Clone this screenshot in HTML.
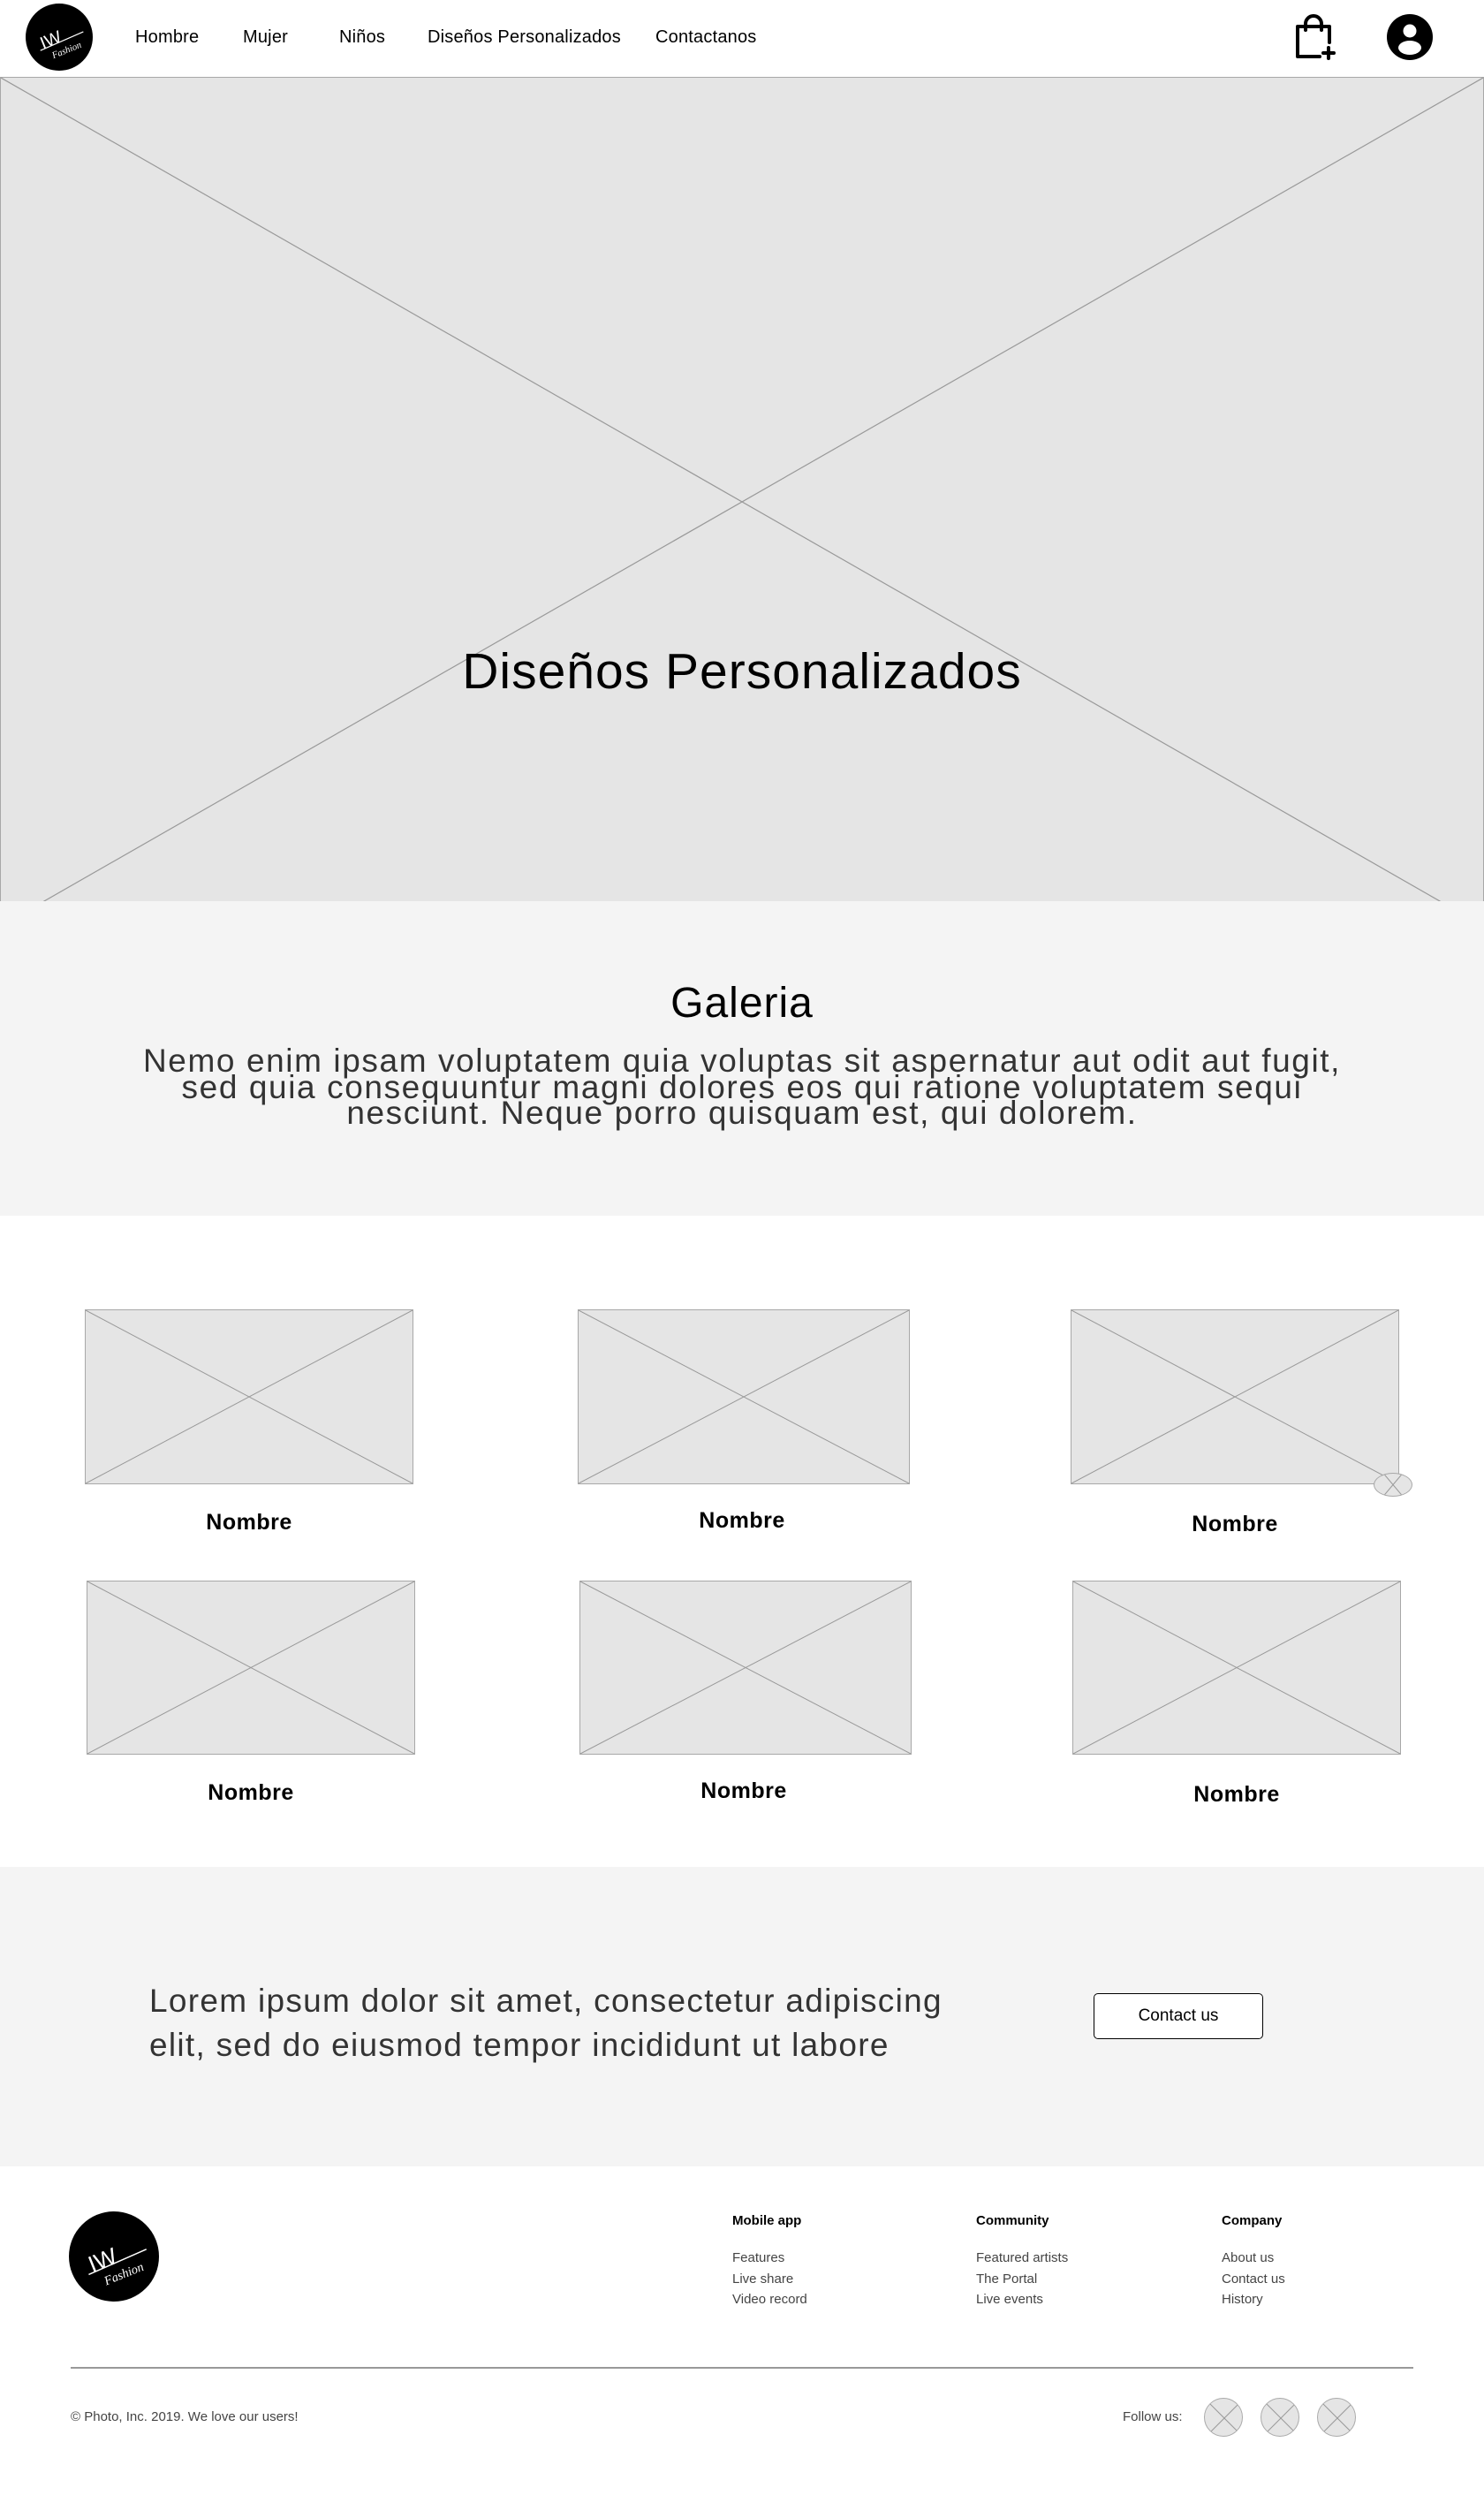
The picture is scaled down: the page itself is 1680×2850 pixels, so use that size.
<!DOCTYPE html>
<html><head><meta charset="utf-8"><style>
*{margin:0;padding:0;box-sizing:border-box}
body{width:1680px;height:2850px;background:#fff;font-family:"Liberation Sans",sans-serif;color:#000;position:relative;overflow:hidden}
.a{position:absolute}
.ph{position:absolute;background:#e5e5e5;border:1.5px solid #a8a8a8}
.ph svg{position:absolute;left:0;top:0;width:100%;height:100%}
.nav{position:absolute;top:31px;font-size:20px;letter-spacing:.2px}
.nm{position:absolute;font-weight:bold;font-size:25px;text-align:center;width:200px;letter-spacing:.5px}
.fh{position:absolute;top:2505px;font-weight:bold;font-size:15px}
.fl{position:absolute;font-size:15px;color:#444;line-height:23.5px;top:2544px}
.soc{position:absolute;top:2714px;width:44px;height:44px;border-radius:50%;background:#e5e5e5;border:1.5px solid #aaa;overflow:hidden}
</style></head><body>

<svg class="a" style="left:29px;top:4px" width="76" height="76" viewBox="0 0 100 100">
<circle cx="50" cy="50" r="50" fill="#000"/>
<text x="22" y="62" fill="#fff" font-family="Liberation Sans" font-size="26" transform="rotate(-22 40 55)">IW</text>
<line x1="22" y1="70" x2="86" y2="42" stroke="#fff" stroke-width="1.5"/>
<text x="38" y="76" fill="#fff" font-family="Liberation Serif" font-style="italic" font-size="14" transform="rotate(-22 55 70)">Fashion</text>
</svg>
<div class="nav" style="left:153px">Hombre</div>
<div class="nav" style="left:275px">Mujer</div>
<div class="nav" style="left:384px">Niños</div>
<div class="nav" style="left:484px">Diseños Personalizados</div>
<div class="nav" style="left:742px">Contactanos</div>

<svg class="a" style="left:1464px;top:16px" width="48" height="54" viewBox="0 0 48 54">
<path d="M14 18 V11 a9 9 0 0 1 18 0 V18" fill="none" stroke="#000" stroke-width="4" stroke-linecap="round"/>
<path d="M30 48 H5 V14 H41 V32" fill="none" stroke="#000" stroke-width="4" stroke-linecap="round" stroke-linejoin="round"/>
<path d="M40 38 V50 M34 44 H46" stroke="#000" stroke-width="4" stroke-linecap="round"/>
</svg>
<svg class="a" style="left:1570px;top:16px" width="52" height="52" viewBox="0 0 52 52">
<circle cx="26" cy="26" r="26" fill="#000"/>
<circle cx="26" cy="19" r="7.5" fill="#fff"/>
<ellipse cx="26" cy="38" rx="13" ry="8" fill="#fff"/>
</svg>

<div class="ph" style="left:0;top:87px;width:1680px;height:934px;overflow:hidden;border-bottom:none">
<svg preserveAspectRatio="none" viewBox="0 0 100 100" style="height:960px"><line x1="0" y1="0" x2="100" y2="100" stroke="#999" stroke-width="1.2" vector-effect="non-scaling-stroke"/><line x1="100" y1="0" x2="0" y2="100" stroke="#999" stroke-width="1.2" vector-effect="non-scaling-stroke"/></svg>
</div>
<div class="a" style="left:0;width:1680px;top:727px;text-align:center;font-size:57px;letter-spacing:1px">Diseños Personalizados</div>

<div class="a" style="left:0;top:1020px;width:1680px;height:356px;background:#f4f4f4"></div>
<div class="a" style="left:0;width:1680px;top:1108px;text-align:center;font-size:48px;letter-spacing:1px">Galeria</div>
<div class="a" style="left:0;width:1680px;top:1186px;text-align:center;font-size:37px;line-height:29.5px;color:#333;letter-spacing:1.6px;white-space:nowrap">Nemo enim ipsam voluptatem quia voluptas sit aspernatur aut odit aut fugit,<br>sed quia consequuntur magni dolores eos qui ratione voluptatem sequi<br>nesciunt. Neque porro quisquam est, qui dolorem.</div>

<div class="ph" style="left:96px;top:1482px;width:372px;height:198px"><svg preserveAspectRatio="none" viewBox="0 0 100 100"><line x1="0" y1="0" x2="100" y2="100" stroke="#999" vector-effect="non-scaling-stroke"/><line x1="100" y1="0" x2="0" y2="100" stroke="#999" vector-effect="non-scaling-stroke"/></svg></div>
<div class="ph" style="left:654px;top:1482px;width:376px;height:198px"><svg preserveAspectRatio="none" viewBox="0 0 100 100"><line x1="0" y1="0" x2="100" y2="100" stroke="#999" vector-effect="non-scaling-stroke"/><line x1="100" y1="0" x2="0" y2="100" stroke="#999" vector-effect="non-scaling-stroke"/></svg></div>
<div class="ph" style="left:1212px;top:1482px;width:372px;height:198px"><svg preserveAspectRatio="none" viewBox="0 0 100 100"><line x1="0" y1="0" x2="100" y2="100" stroke="#999" vector-effect="non-scaling-stroke"/><line x1="100" y1="0" x2="0" y2="100" stroke="#999" vector-effect="non-scaling-stroke"/></svg></div>
<div class="ph" style="left:1555px;top:1667px;width:44px;height:27px;border-radius:50%;overflow:hidden"><svg preserveAspectRatio="none" viewBox="0 0 100 100"><line x1="25" y1="0" x2="75" y2="100" stroke="#999" vector-effect="non-scaling-stroke"/><line x1="75" y1="0" x2="25" y2="100" stroke="#999" vector-effect="non-scaling-stroke"/></svg></div>
<div class="nm" style="left:182px;top:1709px">Nombre</div>
<div class="nm" style="left:740px;top:1707px">Nombre</div>
<div class="nm" style="left:1298px;top:1711px">Nombre</div>

<div class="ph" style="left:98px;top:1789px;width:372px;height:197px"><svg preserveAspectRatio="none" viewBox="0 0 100 100"><line x1="0" y1="0" x2="100" y2="100" stroke="#999" vector-effect="non-scaling-stroke"/><line x1="100" y1="0" x2="0" y2="100" stroke="#999" vector-effect="non-scaling-stroke"/></svg></div>
<div class="ph" style="left:656px;top:1789px;width:376px;height:197px"><svg preserveAspectRatio="none" viewBox="0 0 100 100"><line x1="0" y1="0" x2="100" y2="100" stroke="#999" vector-effect="non-scaling-stroke"/><line x1="100" y1="0" x2="0" y2="100" stroke="#999" vector-effect="non-scaling-stroke"/></svg></div>
<div class="ph" style="left:1214px;top:1789px;width:372px;height:197px"><svg preserveAspectRatio="none" viewBox="0 0 100 100"><line x1="0" y1="0" x2="100" y2="100" stroke="#999" vector-effect="non-scaling-stroke"/><line x1="100" y1="0" x2="0" y2="100" stroke="#999" vector-effect="non-scaling-stroke"/></svg></div>
<div class="nm" style="left:184px;top:2015px">Nombre</div>
<div class="nm" style="left:742px;top:2013px">Nombre</div>
<div class="nm" style="left:1300px;top:2017px">Nombre</div>

<div class="a" style="left:0;top:2113px;width:1680px;height:339px;background:#f4f4f4"></div>
<div class="a" style="left:169px;top:2240px;font-size:37px;line-height:50px;color:#333;letter-spacing:1.3px;white-space:nowrap">Lorem ipsum dolor sit amet, consectetur adipiscing<br>elit, sed do eiusmod tempor incididunt ut labore</div>
<div class="a" style="left:1238px;top:2256px;width:192px;height:52px;border:1.5px solid #000;border-radius:5px;background:#fff;text-align:center;line-height:49px;font-size:19px">Contact us</div>

<svg class="a" style="left:78px;top:2503px" width="102" height="102" viewBox="0 0 100 100">
<circle cx="50" cy="50" r="50" fill="#000"/>
<text x="22" y="62" fill="#fff" font-family="Liberation Sans" font-size="26" transform="rotate(-22 40 55)">IW</text>
<line x1="22" y1="70" x2="86" y2="42" stroke="#fff" stroke-width="1.5"/>
<text x="38" y="76" fill="#fff" font-family="Liberation Serif" font-style="italic" font-size="14" transform="rotate(-22 55 70)">Fashion</text>
</svg>
<div class="fh" style="left:829px">Mobile app</div>
<div class="fh" style="left:1105px">Community</div>
<div class="fh" style="left:1383px">Company</div>
<div class="fl" style="left:829px">Features<br>Live share<br>Video record</div>
<div class="fl" style="left:1105px">Featured artists<br>The Portal<br>Live events</div>
<div class="fl" style="left:1383px">About us<br>Contact us<br>History</div>
<div class="a" style="left:80px;top:2679px;width:1520px;height:2px;background:#999"></div>
<div class="a" style="left:80px;top:2727px;font-size:15px;color:#444">© Photo, Inc. 2019. We love our users!</div>
<div class="a" style="left:1271px;top:2727px;font-size:15px;color:#444">Follow us:</div>
<div class="soc" style="left:1363px"><svg viewBox="0 0 44 44" width="44" height="44"><line x1="6" y1="6" x2="38" y2="38" stroke="#999"/><line x1="38" y1="6" x2="6" y2="38" stroke="#999"/></svg></div>
<div class="soc" style="left:1427px"><svg viewBox="0 0 44 44" width="44" height="44"><line x1="6" y1="6" x2="38" y2="38" stroke="#999"/><line x1="38" y1="6" x2="6" y2="38" stroke="#999"/></svg></div>
<div class="soc" style="left:1491px"><svg viewBox="0 0 44 44" width="44" height="44"><line x1="6" y1="6" x2="38" y2="38" stroke="#999"/><line x1="38" y1="6" x2="6" y2="38" stroke="#999"/></svg></div>
</body></html>
